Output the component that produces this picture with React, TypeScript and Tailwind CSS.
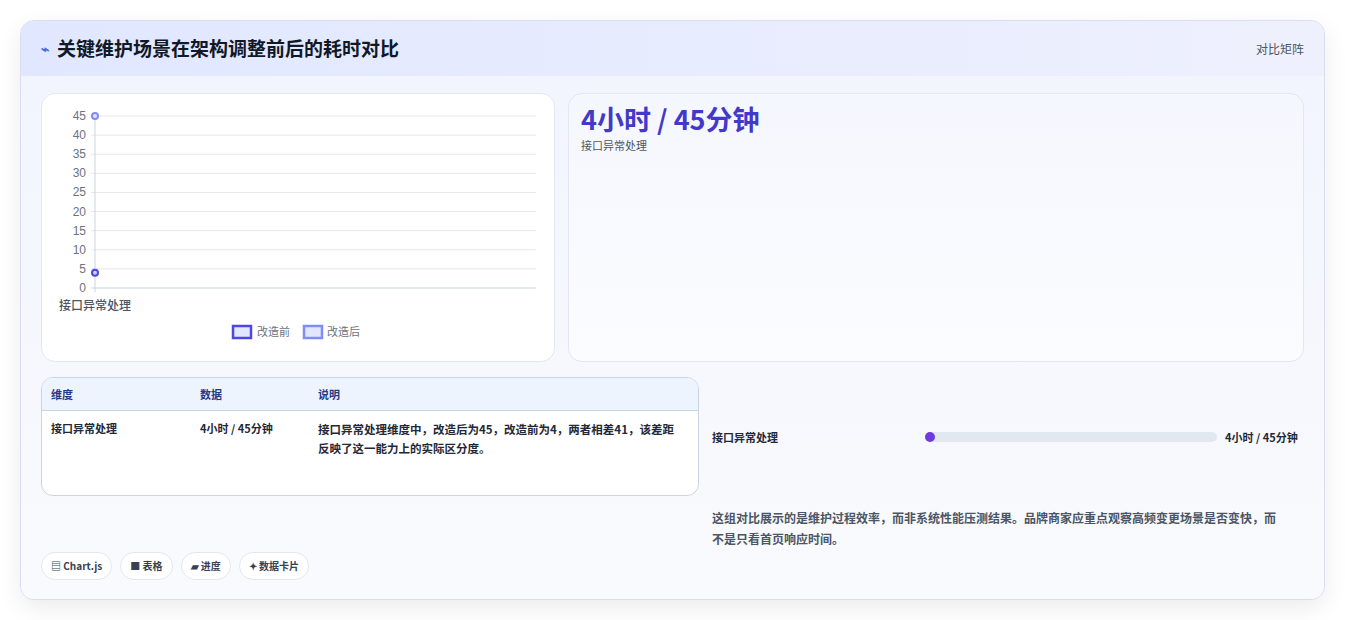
import React from "react";

const F = { fontFamily: '"Noto Sans CJK SC","Noto Sans",sans-serif' };

function Chart() {
  const ticks = [45, 40, 35, 30, 25, 20, 15, 10, 5, 0];
  const top = 22, bottom = 194, left = 53, right = 494;
  const y = (v: number) => bottom - (v / 45) * (bottom - top);
  return (
    <svg width="513" height="268" className="block">
      {ticks.map((t) => (
        <g key={t}>
          <line x1={left - 4} x2={right} y1={y(t)} y2={y(t)} stroke={t === 0 ? "#cbd5e1" : "#e5e7eb"} />
          <text x={left - 9} y={y(t) + 4} textAnchor="end" fontSize="12" fill="#6b7280" fontFamily="Liberation Sans, sans-serif">{t}</text>
        </g>
      ))}
      <line x1={left} x2={left} y1={top} y2={bottom + 4} stroke="#cbd5e1" />
      <circle cx={left} cy={y(45)} r="3" fill="#e0e7ff" stroke="#818cf8" strokeWidth="2" />
      <circle cx={left} cy={y(4)} r="3" fill="#c7d2fe" stroke="#4f46e5" strokeWidth="2" />
      <text x={left} y={216} textAnchor="middle" fontSize="12" fill="#4b5563" fontWeight="500" fontFamily='"Noto Sans CJK SC",sans-serif'>接口异常处理</text>
      <rect x="191" y="232" width="18" height="12" fill="#e0e7ff" stroke="#4f46e5" strokeWidth="2.5" />
      <text x="215" y="242" fontSize="11" fill="#6b7280" fontFamily='"Noto Sans CJK SC",sans-serif'>改造前</text>
      <rect x="262" y="232" width="18" height="12" fill="#e0e7ff" stroke="#818cf8" strokeWidth="2.5" />
      <text x="285" y="242" fontSize="11" fill="#6b7280" fontFamily='"Noto Sans CJK SC",sans-serif'>改造后</text>
    </svg>
  );
}

export default function App() {
  return (
    <div className="w-[1345px] h-[620px] bg-white pt-[20px] pl-[20px]" style={F}>
      <div className="w-[1305px] h-[580px] rounded-[14px] border border-[#d9dcf3] bg-[#f8f9fd] shadow-[0_8px_24px_rgba(0,0,0,0.08)] overflow-hidden flex flex-col">
        <div className="h-[55px] flex items-center justify-between px-5 bg-gradient-to-r from-[#e0e7ff] to-[#eef0fd]">
          <div className="flex items-center gap-[8px]">
            <span className="text-[#4f6ad8] text-[14px] font-bold">⌁</span>
            <span className="text-[19px] font-bold text-[#111827]">关键维护场景在架构调整前后的耗时对比</span>
          </div>
          <span className="text-[12px] text-[#4b5563]">对比矩阵</span>
        </div>
        <div className="flex-1 px-5 pt-[17px] flex flex-col bg-gradient-to-b from-[#f2f5fe] to-[#f9fafd]">
          <div className="flex gap-[13px]">
            <div className="w-[514px] h-[269px] bg-white rounded-[14px] border border-[#e3e7f3] overflow-hidden">
              <Chart />
            </div>
            <div className="flex-1 h-[269px] rounded-[14px] border border-[#e3e7f3] bg-gradient-to-b from-[#f5f7fe] to-[#fbfcff] px-[12px] pt-[7px]">
              <div className="text-[27px] font-bold text-[#4338ca] leading-[36px]">4小时 / 45分钟</div>
              <div className="text-[11px] text-[#4b5563]">接口异常处理</div>
            </div>
          </div>
          <div className="flex gap-[13px] mt-[15px]">
            <div className="w-[658px] h-[119px] rounded-[12px] border border-[#cbd5e1] bg-white overflow-hidden text-[11px]">
              <div className="flex h-[33px] items-center bg-[#eef4fe] border-b border-[#cbd5e1] font-bold text-[#1e3a8a]">
                <div className="w-[158px] pl-[9px]">维度</div>
                <div className="w-[118px]">数据</div>
                <div>说明</div>
              </div>
              <div className="flex pt-[9px] text-[#1f2937] font-semibold">
                <div className="w-[158px] pl-[9px]">接口异常处理</div>
                <div className="w-[118px]">4小时 / 45分钟</div>
                <div className="w-[362px] text-[11.5px] leading-[19px]">接口异常处理维度中，改造后为45，改造前为4，两者相差41，该差距反映了这一能力上的实际区分度。</div>
              </div>
            </div>
            <div className="flex-1 flex flex-col pt-[52px]">
              <div className="flex items-center text-[11px] font-bold text-[#1f2937]">
                <div className="w-[213px]">接口异常处理</div>
                <div className="w-[292px] h-[10px] rounded-full bg-[#e2e8f0] relative">
                  <div className="absolute left-0 top-0 w-[10px] h-[10px] rounded-full bg-[#6d3be0]" />
                </div>
                <div className="ml-[8px]">4小时 / 45分钟</div>
              </div>
              <div className="mt-[61px] text-[12px] leading-[21px] text-[#4b5563] font-semibold w-[575px]">
                这组对比展示的是维护过程效率，而非系统性能压测结果。品牌商家应重点观察高频变更场景是否变快，而不是只看首页响应时间。
              </div>
            </div>
          </div>
          <div className="flex gap-[8px] mt-[3px] text-[10px] font-bold text-[#374151]">
            {["▤ Chart.js", "■ 表格", "▰ 进度", "✦ 数据卡片"].map((t) => (
              <div key={t} className="h-[28px] px-[9px] flex items-center rounded-full border border-[#e5e7eb] bg-white">{t}</div>
            ))}
          </div>
        </div>
      </div>
    </div>
  );
}
